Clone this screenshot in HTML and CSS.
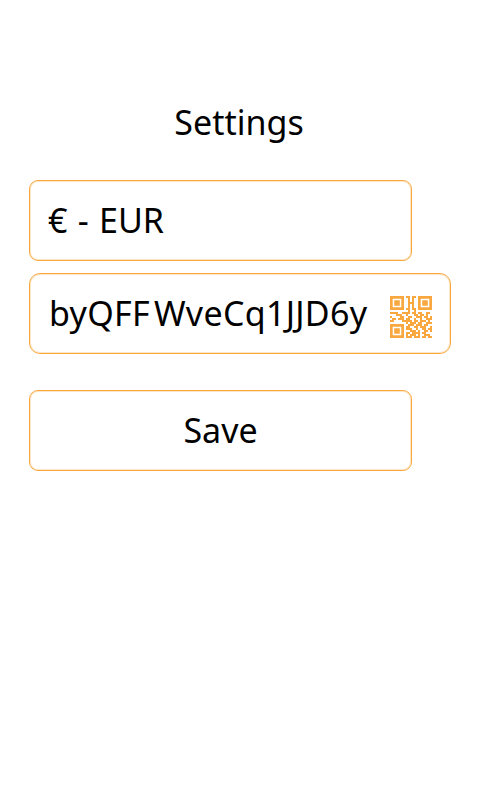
FILE: index.html
```html
<!DOCTYPE html>
<html lang="en">
<head>
<meta charset="utf-8">
<title>Settings</title>
<link rel="stylesheet" href="styles.css">
</head>
<body>
<main class="screen">
  <h1 class="title">Settings</h1>
  <div class="field field-short currency">€ - EUR</div>
  <div class="field field-wide">
    <span class="address">byQFF<span class="tight">W</span>veCq1JJD6y</span>
    <svg class="qr" viewBox="0 0 21 21" aria-hidden="true">
      <path class="qr-finder" fill-rule="evenodd" d="M0 0h7v7h-7zM1.35 1.35v4.3h4.3v-4.3zM2.1 2.1h2.8v2.8h-2.8zM14 0h7v7h-7zM15.35 1.35v4.3h4.3v-4.3zM16.1 2.1h2.8v2.8h-2.8zM0 14h7v7h-7zM1.35 15.35v4.3h4.3v-4.3zM2.1 16.1h2.8v2.8h-2.8z"/>
      <path class="qr-data" d="M8 .5h2M11 .5h2M9 1.5h1M11 1.5h1M9 2.5h1M11 2.5h1M9 3.5h3M9 4.5h1M11 4.5h1M9 5.5h1M11 5.5h1M8 6.5h2M11 6.5h2M9 7.5h1M12 7.5h1M0 8.5h4M6 8.5h4M11 8.5h2M14 8.5h2M18 8.5h2M3 9.5h3M8 9.5h1M12 9.5h2M15 9.5h2M18 9.5h1M0 10.5h1M5 10.5h2M9 10.5h2M13 10.5h3M17 10.5h2M20 10.5h1M1 11.5h2M4 11.5h3M8 11.5h2M12 11.5h1M15 11.5h1M18 11.5h3M0 12.5h2M6 12.5h5M12 12.5h2M15 12.5h3M19 12.5h1M8 13.5h1M10 13.5h3M14 13.5h2M18 13.5h3M9 14.5h3M13 14.5h3M17 14.5h2M8 15.5h2M12 15.5h2M15 15.5h3M20 15.5h1M8 16.5h3M13 16.5h1M16 16.5h2M19 16.5h2M10 17.5h3M14 17.5h1M17 17.5h2M20 17.5h1M8 18.5h2M11 18.5h4M16 18.5h2M8 19.5h1M10 19.5h3M14 19.5h1M17 19.5h3M8 20.5h3M12 20.5h3M16 20.5h2M19 20.5h2"/>
    </svg>
  </div>
  <button class="field field-short save" type="button">Save</button>
</main>
</body>
</html>
```
FILE: styles.css
```css
* {
  box-sizing: border-box;
}
html, body {
  margin: 0;
  height: 100%;
  background: #fff;
}
.screen {
  width: 480px;
  height: 800px;
  padding: 0 29px;
  display: flex;
  flex-direction: column;
  align-items: flex-start;
  font-family: "Noto Sans", "Open Sans", sans-serif;
  color: #000;
  overflow: hidden;
}
.title {
  width: 422px;
  margin: 98px 0 34px;
  padding-right: 2px;
  text-align: center;
  font-size: 34px;
  font-weight: 400;
  line-height: 48px;
}
.field {
  height: 81px;
  padding-bottom: 2px;
  border: 1px solid #f9a83f;
  border-radius: 9px;
  box-shadow: inset 0 0 0 1px #fde6c8;
  background: #fff;
  display: flex;
  align-items: center;
  font-family: inherit;
  font-size: 34px;
  color: #000;
}
.field-short {
  width: 383px;
  padding-left: 18px;
  padding-right: 18px;
  margin-bottom: 12px;
}
.currency {
  word-spacing: 1.5px;
}
.field-wide {
  width: 422px;
  padding-left: 19px;
  padding-right: 18px;
  justify-content: space-between;
  margin-bottom: 36px;
  border-radius: 11px;
}
.address {
  white-space: nowrap;
  letter-spacing: 0.3px;
}
.tight {
  margin-left: 4px;
}
.qr {
  width: 42px;
  height: 42px;
  flex: none;
  margin-top: 8px;
}
.qr-finder {
  fill: #f9a83f;
}
.qr-data {
  fill: none;
  stroke: #f9a83f;
  stroke-width: 1;
  shape-rendering: crispEdges;
}
.save {
  justify-content: center;
  padding-left: 0;
  padding-right: 0;
  margin: 0;
}
```
